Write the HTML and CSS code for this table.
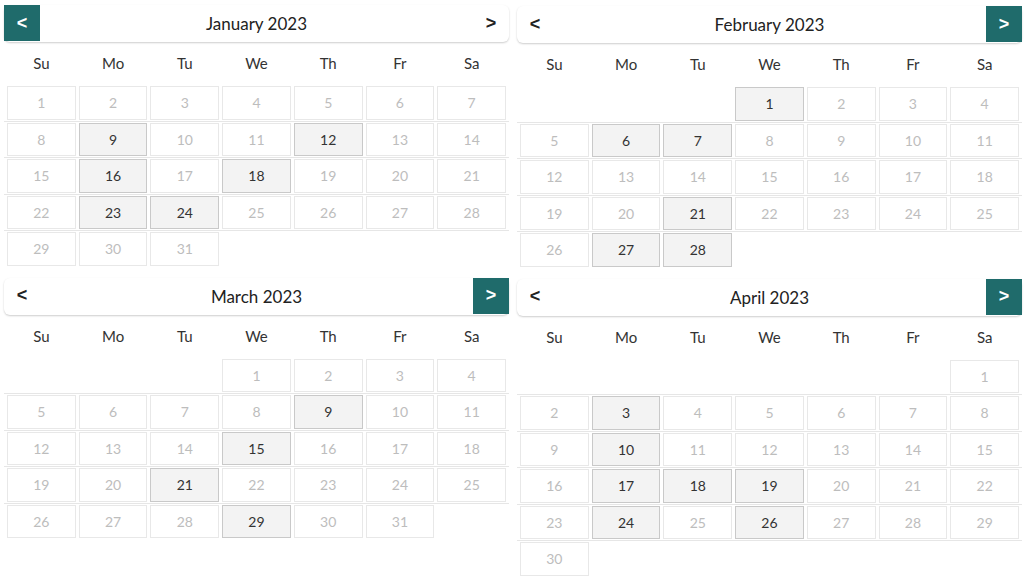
FILE: index.html
```html
<!DOCTYPE html>
<html lang="en">
<head>
<meta charset="utf-8">
<title>Calendars 2023</title>
<link rel="stylesheet" href="styles.css">
</head>
<body>
<div class="months">
  <section class="cal">
    <div class="head"><span class="nav on">&lt;</span><span class="title">January 2023</span><span class="nav">&gt;</span></div>
    <div class="dow"><span>Su</span><span>Mo</span><span>Tu</span><span>We</span><span>Th</span><span>Fr</span><span>Sa</span></div>
    <div class="week"><span class="c">1</span><span class="c">2</span><span class="c">3</span><span class="c">4</span><span class="c">5</span><span class="c">6</span><span class="c">7</span></div>
    <div class="week"><span class="c">8</span><span class="c a">9</span><span class="c">10</span><span class="c">11</span><span class="c a">12</span><span class="c">13</span><span class="c">14</span></div>
    <div class="week"><span class="c">15</span><span class="c a">16</span><span class="c">17</span><span class="c a">18</span><span class="c">19</span><span class="c">20</span><span class="c">21</span></div>
    <div class="week"><span class="c">22</span><span class="c a">23</span><span class="c a">24</span><span class="c">25</span><span class="c">26</span><span class="c">27</span><span class="c">28</span></div>
    <div class="week"><span class="c">29</span><span class="c">30</span><span class="c">31</span></div>
  </section>
  <section class="cal right">
    <div class="head"><span class="nav">&lt;</span><span class="title">February 2023</span><span class="nav on">&gt;</span></div>
    <div class="dow"><span>Su</span><span>Mo</span><span>Tu</span><span>We</span><span>Th</span><span>Fr</span><span>Sa</span></div>
    <div class="week"><span class="c e"></span><span class="c e"></span><span class="c e"></span><span class="c a">1</span><span class="c">2</span><span class="c">3</span><span class="c">4</span></div>
    <div class="week"><span class="c">5</span><span class="c a">6</span><span class="c a">7</span><span class="c">8</span><span class="c">9</span><span class="c">10</span><span class="c">11</span></div>
    <div class="week"><span class="c">12</span><span class="c">13</span><span class="c">14</span><span class="c">15</span><span class="c">16</span><span class="c">17</span><span class="c">18</span></div>
    <div class="week"><span class="c">19</span><span class="c">20</span><span class="c a">21</span><span class="c">22</span><span class="c">23</span><span class="c">24</span><span class="c">25</span></div>
    <div class="week"><span class="c">26</span><span class="c a">27</span><span class="c a">28</span></div>
  </section>
  <section class="cal">
    <div class="head"><span class="nav">&lt;</span><span class="title">March 2023</span><span class="nav on">&gt;</span></div>
    <div class="dow"><span>Su</span><span>Mo</span><span>Tu</span><span>We</span><span>Th</span><span>Fr</span><span>Sa</span></div>
    <div class="week"><span class="c e"></span><span class="c e"></span><span class="c e"></span><span class="c">1</span><span class="c">2</span><span class="c">3</span><span class="c">4</span></div>
    <div class="week"><span class="c">5</span><span class="c">6</span><span class="c">7</span><span class="c">8</span><span class="c a">9</span><span class="c">10</span><span class="c">11</span></div>
    <div class="week"><span class="c">12</span><span class="c">13</span><span class="c">14</span><span class="c a">15</span><span class="c">16</span><span class="c">17</span><span class="c">18</span></div>
    <div class="week"><span class="c">19</span><span class="c">20</span><span class="c a">21</span><span class="c">22</span><span class="c">23</span><span class="c">24</span><span class="c">25</span></div>
    <div class="week"><span class="c">26</span><span class="c">27</span><span class="c">28</span><span class="c a">29</span><span class="c">30</span><span class="c">31</span></div>
  </section>
  <section class="cal right">
    <div class="head"><span class="nav">&lt;</span><span class="title">April 2023</span><span class="nav on">&gt;</span></div>
    <div class="dow"><span>Su</span><span>Mo</span><span>Tu</span><span>We</span><span>Th</span><span>Fr</span><span>Sa</span></div>
    <div class="week"><span class="c e"></span><span class="c e"></span><span class="c e"></span><span class="c e"></span><span class="c e"></span><span class="c e"></span><span class="c">1</span></div>
    <div class="week"><span class="c">2</span><span class="c a">3</span><span class="c">4</span><span class="c">5</span><span class="c">6</span><span class="c">7</span><span class="c">8</span></div>
    <div class="week"><span class="c">9</span><span class="c a">10</span><span class="c">11</span><span class="c">12</span><span class="c">13</span><span class="c">14</span><span class="c">15</span></div>
    <div class="week"><span class="c">16</span><span class="c a">17</span><span class="c a">18</span><span class="c a">19</span><span class="c">20</span><span class="c">21</span><span class="c">22</span></div>
    <div class="week"><span class="c">23</span><span class="c a">24</span><span class="c">25</span><span class="c a">26</span><span class="c">27</span><span class="c">28</span><span class="c">29</span></div>
    <div class="week"><span class="c">30</span></div>
  </section>
</div>
</body>
</html>
```
FILE: styles.css
```css
html, body {
  margin: 0;
  background: #fff;
}
body {
  font-family: Lato, "Liberation Sans", sans-serif;
  color: #333;
}
.months {
  display: grid;
  grid-template-columns: 505px 505px;
  column-gap: 8px;
  row-gap: 10px;
  padding: 5px 0 0 4px;
  align-items: start;
}
.cal.right {
  margin-top: 1px;
}
.head {
  display: flex;
  align-items: center;
  height: 37px;
  border-radius: 6px;
  box-shadow: 0 1px 2px rgba(0, 0, 0, 0.2);
  background: #fff;
}
.nav {
  align-self: flex-start;
  width: 36px;
  height: 36px;
  display: flex;
  align-items: center;
  justify-content: center;
  font-family: "Liberation Sans", Arial, sans-serif;
  font-size: 18px;
  font-weight: 700;
  color: #222;
}
.nav.on {
  background: #1f6b6b;
  color: #fff;
}
.title {
  flex: 1;
  text-align: center;
  font-size: 17px;
  color: #222;
}
.dow {
  display: grid;
  grid-template-columns: repeat(7, 1fr);
  column-gap: 3px;
  padding: 3px 3px 4px;
  line-height: 36px;
  font-size: 15px;
  text-align: center;
  color: #333;
}
.week {
  display: grid;
  grid-template-columns: repeat(7, 1fr);
  column-gap: 3px;
  padding: 1px 3px;
}
.week + .week {
  border-top: 1px solid #e6e6e6;
}
.c {
  height: 33.5px;
  box-sizing: border-box;
  border: 1px solid #e8e8e8;
  display: flex;
  align-items: center;
  justify-content: center;
  font-size: 14px;
  color: #bdbdbd;
}
.c.a {
  background: #f3f3f3;
  border-color: #c9c9c9;
  color: #333;
}
.c.e {
  border: none;
}
```
